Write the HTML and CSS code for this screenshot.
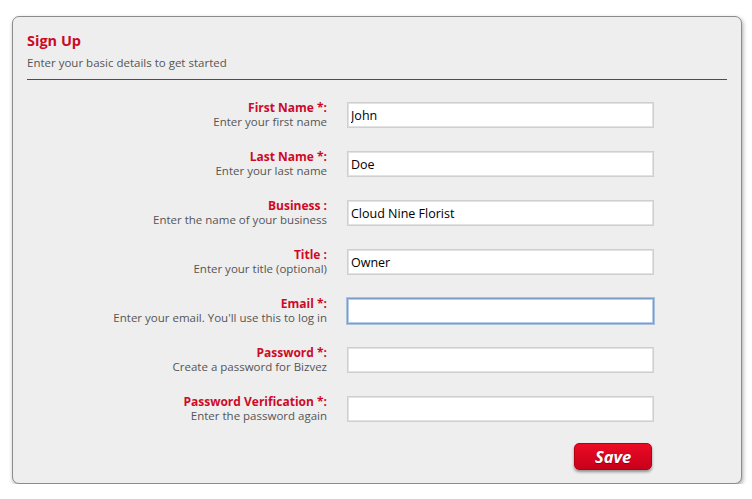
FILE: index.html
```html
<!DOCTYPE html>
<html lang="en">
<head>
<meta charset="utf-8">
<title>Sign Up</title>
<link rel="stylesheet" href="styles.css">
</head>
<body>
<div class="panel">
  <div class="panel-head">
    <h1 class="title">Sign Up</h1>
    <p class="subtitle">Enter your basic details to get started</p>
  </div>
  <form class="form">
    <div class="row">
      <div class="label"><span class="name">First Name *:</span><span class="hint">Enter your first name</span></div>
      <input class="field" type="text" value="John">
    </div>
    <div class="row">
      <div class="label"><span class="name">Last Name *:</span><span class="hint">Enter your last name</span></div>
      <input class="field" type="text" value="Doe">
    </div>
    <div class="row">
      <div class="label"><span class="name">Business :</span><span class="hint">Enter the name of your business</span></div>
      <input class="field" type="text" value="Cloud Nine Florist">
    </div>
    <div class="row">
      <div class="label"><span class="name">Title :</span><span class="hint">Enter your title (optional)</span></div>
      <input class="field" type="text" value="Owner">
    </div>
    <div class="row">
      <div class="label"><span class="name">Email *:</span><span class="hint">Enter your email. You'll use this to log in</span></div>
      <input class="field focused" type="text" value="">
    </div>
    <div class="row">
      <div class="label"><span class="name">Password *:</span><span class="hint">Create a password for Bizvez</span></div>
      <input class="field" type="password" value="">
    </div>
    <div class="row">
      <div class="label"><span class="name">Password Verification *:</span><span class="hint">Enter the password again</span></div>
      <input class="field" type="password" value="">
    </div>
    <div class="actions">
      <button class="save" type="button">Save</button>
    </div>
  </form>
</div>
</body>
</html>
```
FILE: styles.css
```css
html, body {
  margin: 0;
  padding: 0;
  background: #ffffff;
}
body {
  font-family: "Open Sans", "DejaVu Sans", sans-serif;
  color: #555555;
}
.panel {
  margin: 16px 0 0 12px;
  box-sizing: border-box;
  width: 730px;
  height: 468px;
  border: 1px solid #8c8c8c;
  border-radius: 7px;
  background: #eeeeee;
  box-shadow: 1px 2px 4px rgba(0, 0, 0, 0.35);
  padding: 0 14px;
}
.panel-head {
  padding-top: 14px;
  padding-bottom: 9px;
  border-bottom: 1px solid #d0102c;
}
.title {
  margin: 0;
  font-size: 14.5px;
  line-height: 19px;
  font-weight: bold;
  color: #cc0a27;
}
.subtitle {
  margin: 6px 0 0;
  font-size: 11.5px;
  line-height: 14px;
  color: #555555;
}
.form {
  margin: 0;
  padding-top: 22px;
  display: flex;
  flex-direction: column;
  gap: 23px;
}
.row {
  display: grid;
  grid-template-columns: 300px 307px;
  grid-template-rows: 26px;
  column-gap: 20px;
  align-items: center;
}
.label {
  display: flex;
  flex-direction: column;
  align-items: flex-end;
  margin-top: -1px;
}
.name {
  font-size: 12px;
  line-height: 15px;
  font-weight: bold;
  color: #cc0a27;
}
.hint {
  font-size: 11.5px;
  line-height: 14px;
  color: #555555;
}
.field {
  box-sizing: border-box;
  width: 307px;
  height: 26px;
  margin: 0;
  padding: 0 3px;
  border: 1px solid #cfcfcf;
  box-shadow: inset 0 0 0 1px #e2e2e2;
  background: #ffffff;
  font-family: "Open Sans", "DejaVu Sans", sans-serif;
  font-size: 12.5px;
  color: #000000;
  outline: none;
}
.field.focused {
  border: 1px solid #7a9cc8;
  box-shadow: 0 0 0 1px #a9c2e2, inset 0 0 0 1px #b8cde8;
}
.actions {
  display: flex;
  justify-content: flex-end;
  width: 625px;
  margin-top: -2px;
}
.save {
  width: 78px;
  height: 27px;
  border: 1px solid #b30014;
  border-radius: 5px;
  background: linear-gradient(#ec0a25, #c8001a);
  box-shadow: 0 2px 3px rgba(0, 0, 0, 0.4);
  color: #ffffff;
  font-family: "Open Sans", "DejaVu Sans", sans-serif;
  font-size: 16.5px;
  font-weight: bold;
  font-style: italic;
  text-shadow: 0 1px 1px rgba(0, 0, 0, 0.35);
  padding: 0;
  line-height: 24px;
}
```
